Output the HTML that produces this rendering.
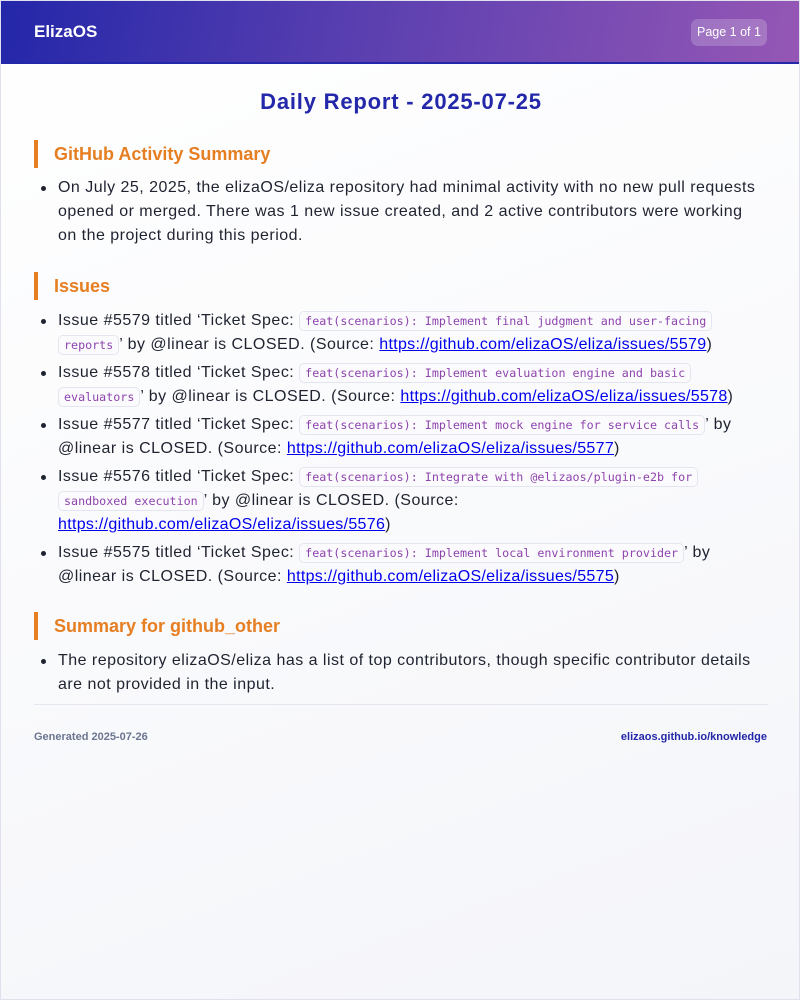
<!DOCTYPE html>
<html><head><meta charset="utf-8"><style>
*{margin:0;padding:0;box-sizing:border-box}
body{width:800px;height:1000px;font-family:"Liberation Sans",sans-serif;color:#1f2330;background:linear-gradient(160deg,#fff 0%,#f4f5f9 100%);border:1px solid #dfe2ec;position:relative;overflow:hidden}
.hdr{height:63px;background:linear-gradient(100deg,#2327a9 0%,#5a3fb0 45%,#9557b5 100%);border-bottom:2px solid #2327a9;position:relative}
.logo{position:absolute;left:33px;top:21px;color:#fff;font-weight:bold;font-size:17px}
.pg{position:absolute;right:32px;top:18px;width:76px;height:27px;border-radius:7px;background:rgba(255,255,255,.2);color:#fff;font-size:12.5px;line-height:27px;text-align:center}
h1{position:absolute;top:88px;left:0;width:800px;text-align:center;font-size:22px;letter-spacing:0.8px;color:#2327a9}
h2{position:absolute;left:33px;border-left:4px solid #e67e22;padding-left:16px;color:#e67e22;font-size:18px;height:28px;line-height:28px;font-weight:bold}
ul{position:absolute;left:57px;list-style:none}
li{font-size:16px;line-height:24px;position:relative;white-space:nowrap;letter-spacing:0.48px}
li:before{content:"";position:absolute;left:-17px;top:10px;width:5px;height:5px;border-radius:50%;background:#1f2330}
a{color:#0000ee;text-decoration:underline;letter-spacing:0.3px}
code{font-family:"DejaVu Sans Mono",monospace;font-size:11.7px;letter-spacing:0;color:#8e44ad;background:#fbfbfd;border:1px solid #e3e6ef;border-radius:5px;padding:2px 5px}
.ft{position:absolute;top:703px;left:33px;width:734px;border-top:1px solid #e3e6ef}
.ftl{position:absolute;left:33px;top:730px;font-size:11px;color:#6b7590;font-weight:bold}
.ftr{position:absolute;right:32px;top:730px;font-size:11px;color:#2327a9;font-weight:bold}
</style></head><body>
<div class="hdr"><div class="logo">ElizaOS</div><div class="pg">Page 1 of 1</div></div>
<h1>Daily Report - 2025-07-25</h1>
<h2 style="top:139px">GitHub Activity Summary</h2>
<ul style="top:175px"><li>On July 25, 2025, the elizaOS/eliza repository had minimal activity with no new pull requests<br>opened or merged. There was 1 new issue created, and 2 active contributors were working<br>on the project during this period.</li></ul>
<h2 style="top:271px">Issues</h2>
<ul style="top:308px">
<li style="margin-bottom:4px">Issue #5579 titled ‘Ticket Spec: <code>feat(scenarios): Implement final judgment and user-facing</code><br><code>reports</code>’ by @linear is CLOSED. (Source: <a>https://github.com/elizaOS/eliza/issues/5579</a>)</li>
<li style="margin-bottom:4px">Issue #5578 titled ‘Ticket Spec: <code>feat(scenarios): Implement evaluation engine and basic</code><br><code>evaluators</code>’ by @linear is CLOSED. (Source: <a>https://github.com/elizaOS/eliza/issues/5578</a>)</li>
<li style="margin-bottom:4px">Issue #5577 titled ‘Ticket Spec: <code>feat(scenarios): Implement mock engine for service calls</code>’ by<br>@linear is CLOSED. (Source: <a>https://github.com/elizaOS/eliza/issues/5577</a>)</li>
<li style="margin-bottom:4px">Issue #5576 titled ‘Ticket Spec: <code>feat(scenarios): Integrate with @elizaos/plugin-e2b for</code><br><code>sandboxed execution</code>’ by @linear is CLOSED. (Source:<br><a>https://github.com/elizaOS/eliza/issues/5576</a>)</li>
<li>Issue #5575 titled ‘Ticket Spec: <code>feat(scenarios): Implement local environment provider</code>’ by<br>@linear is CLOSED. (Source: <a>https://github.com/elizaOS/eliza/issues/5575</a>)</li>
</ul>
<h2 style="top:611px">Summary for github_other</h2>
<ul style="top:648px"><li>The repository elizaOS/eliza has a list of top contributors, though specific contributor details<br>are not provided in the input.</li></ul>
<div class="ft"></div>
<div class="ftl">Generated 2025-07-26</div>
<div class="ftr">elizaos.github.io/knowledge</div>
</body></html>
